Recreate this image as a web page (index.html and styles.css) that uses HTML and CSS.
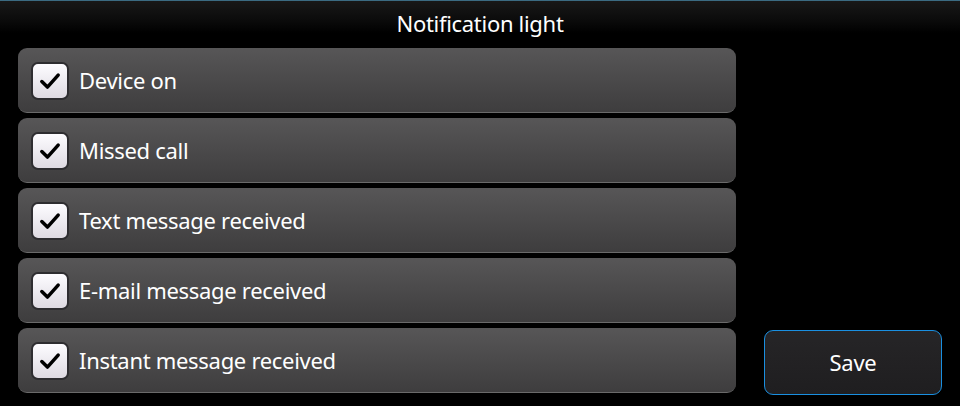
FILE: index.html
```html
<!DOCTYPE html>
<html>
<head>
<meta charset="utf-8">
<link rel="stylesheet" href="styles.css">
</head>
<body>
<div class="screen">
  <header class="title">Notification light</header>
  <div class="content">
    <div class="list">
      <div class="row"><span class="box"><svg viewBox="0 0 24 24"><path d="M5 12.5 L9.8 17.2 L19 7"/></svg></span><span class="label">Device on</span></div>
      <div class="row"><span class="box"><svg viewBox="0 0 24 24"><path d="M5 12.5 L9.8 17.2 L19 7"/></svg></span><span class="label">Missed call</span></div>
      <div class="row"><span class="box"><svg viewBox="0 0 24 24"><path d="M5 12.5 L9.8 17.2 L19 7"/></svg></span><span class="label">Text message received</span></div>
      <div class="row"><span class="box"><svg viewBox="0 0 24 24"><path d="M5 12.5 L9.8 17.2 L19 7"/></svg></span><span class="label">E-mail message received</span></div>
      <div class="row"><span class="box"><svg viewBox="0 0 24 24"><path d="M5 12.5 L9.8 17.2 L19 7"/></svg></span><span class="label">Instant message received</span></div>
    </div>
    <div class="side">
      <button class="save">Save</button>
    </div>
  </div>
</div>
</body>
</html>
```

FILE: styles.css
```css
html, body {
  margin: 0;
  padding: 0;
  background: #000;
}
body {
  width: 960px;
  height: 406px;
  overflow: hidden;
  font-family: "Noto Sans", "Open Sans", sans-serif;
  color: #fff;
}
.screen {
  display: flex;
  flex-direction: column;
  height: 406px;
}
.title {
  height: 47px;
  box-sizing: border-box;
  border-top: 1px solid #3b6b82;
  background: linear-gradient(#181818 0px, #0c0c0c 18px, #000 32px);
  text-align: center;
  font-size: 22px;
  line-height: 44px;
  letter-spacing: -0.3px;
}
.content {
  display: flex;
  padding: 1px 18px 0 18px;
  gap: 28px;
}
.list {
  width: 718px;
  display: flex;
  flex-direction: column;
  gap: 5px;
}
.row {
  height: 65px;
  box-sizing: border-box;
  border-radius: 9px;
  background: linear-gradient(#575657, #3e3d3e);
  border-bottom: 1px solid #6a6a6a;
  display: flex;
  align-items: center;
  padding-left: 13px;
  padding-top: 1px;
}
.box {
  width: 38px;
  height: 38px;
  box-sizing: border-box;
  border: 2px solid #2e2d30;
  border-radius: 7px;
  background: linear-gradient(#fdfcff, #dedae2);
  display: flex;
  align-items: center;
  justify-content: center;
  margin-right: 10px;
}
.box svg {
  width: 28px;
  height: 28px;
}
.box path {
  fill: none;
  stroke: #000;
  stroke-width: 3;
  stroke-linecap: round;
  stroke-linejoin: round;
}
.label {
  font-size: 22px;
  letter-spacing: -0.3px;
  padding-bottom: 2px;
}
.side {
  flex: 1;
  display: flex;
  flex-direction: column;
  justify-content: flex-end;
}
.save {
  width: 178px;
  height: 65px;
  margin-bottom: -2px;
  box-sizing: border-box;
  border: 1.5px solid #1a8fe0;
  border-radius: 9px;
  background: linear-gradient(#262527, #1f1e20);
  color: #fff;
  font-family: "Noto Sans", "Open Sans", sans-serif;
  font-size: 22px;
  letter-spacing: -0.3px;
  padding: 0 0 2px 0;
}
```
